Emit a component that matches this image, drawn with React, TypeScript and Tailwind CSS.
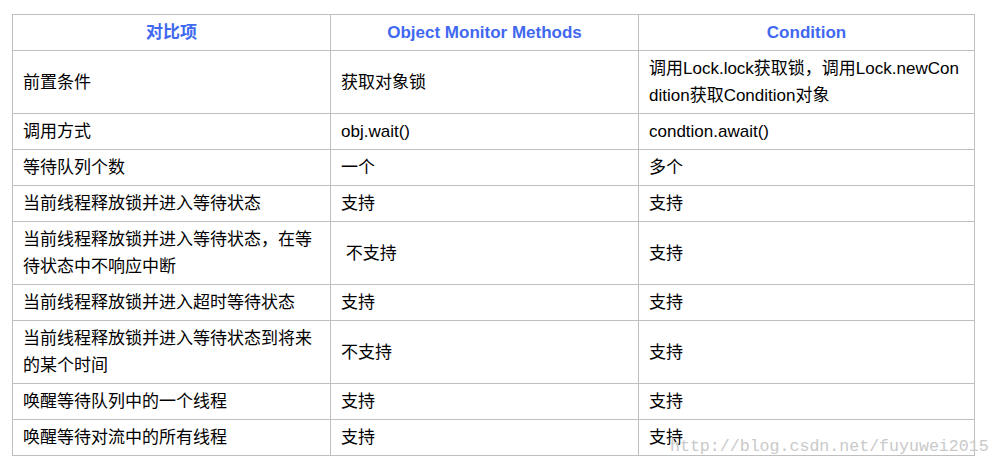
import React from 'react';

const rows: [string, string, string][] = [
  ['前置条件', '获取对象锁', '调用Lock.lock获取锁，调用Lock.newCondition获取Condition对象'],
  ['调用方式', 'obj.wait()', 'condtion.await()'],
  ['等待队列个数', '一个', '多个'],
  ['当前线程释放锁并进入等待状态', '支持', '支持'],
  ['当前线程释放锁并进入等待状态，在等待状态中不响应中断', '\u00a0不支持', '支持'],
  ['当前线程释放锁并进入超时等待状态', '支持', '支持'],
  ['当前线程释放锁并进入等待状态到将来的某个时间', '不支持', '支持'],
  ['唤醒等待队列中的一个线程', '支持', '支持'],
  ['唤醒等待对流中的所有线程', '支持', '支持'],
];

const headers = ['对比项', 'Object Monitor Methods', 'Condition'];

export default function App() {
  return (
    <div
      className="relative w-[1002px] h-[470px] bg-white pl-[12px] pt-[14px]"
      style={{ fontFamily: '"Liberation Sans", "Noto Sans CJK SC", sans-serif' }}
    >
      <table className="table-fixed border-collapse w-[962px] text-[17px] leading-[27px] text-black">
        <colgroup>
          <col className="w-[318px]" />
          <col className="w-[308px]" />
          <col className="w-[336px]" />
        </colgroup>
        <thead>
          <tr>
            {headers.map((h) => (
              <th
                key={h}
                className="border border-[#bfbfbf] px-[10px] py-[4px] text-center font-bold text-[#4169f0]"
              >
                {h}
              </th>
            ))}
          </tr>
        </thead>
        <tbody>
          {rows.map((r, i) => (
            <tr key={i}>
              {r.map((c, j) => (
                <td
                  key={j}
                  className="border border-[#bfbfbf] px-[10px] py-[4px] align-middle break-all"
                >
                  {c}
                </td>
              ))}
            </tr>
          ))}
        </tbody>
      </table>

      {/* csdn watermark */}
      <div
        className="absolute left-[670px] top-[437px] text-[16.6px] leading-[20px] text-[#c9c9c9] whitespace-nowrap"
        style={{ fontFamily: '"Liberation Mono", monospace' }}
      >
        http://blog.csdn.net/fuyuwei2015
      </div>
    </div>
  );
}
